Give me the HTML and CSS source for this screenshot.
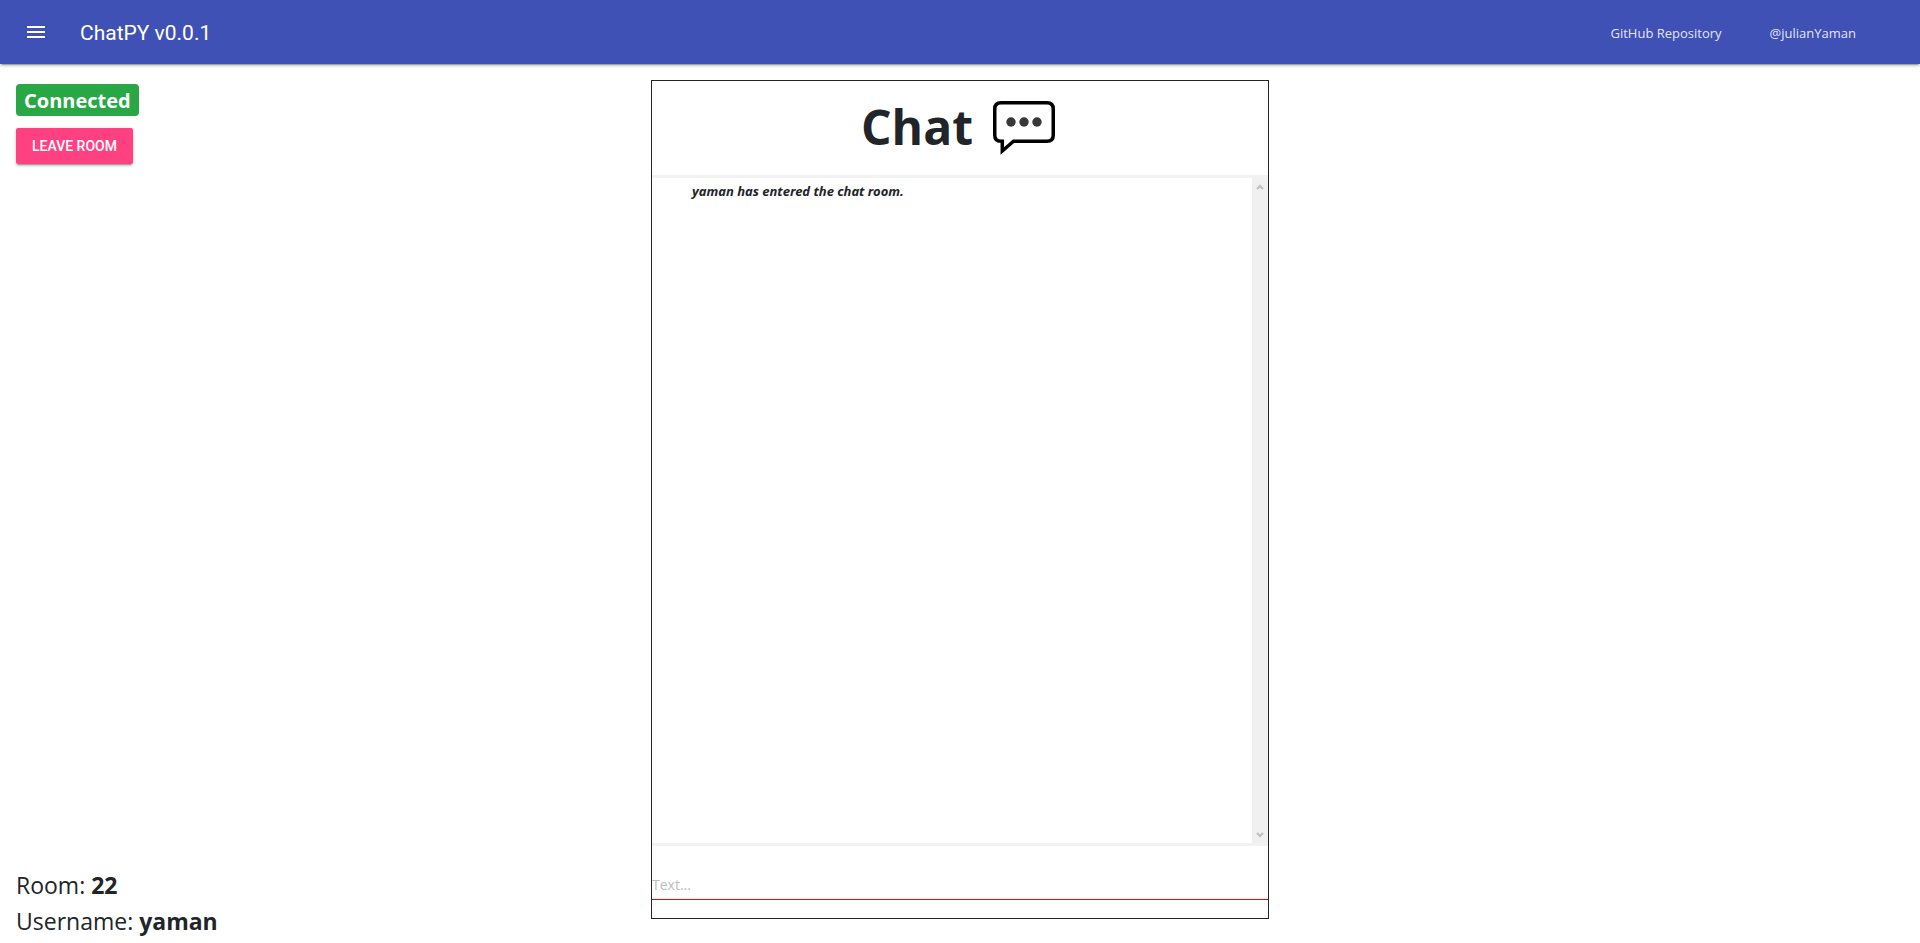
FILE: index.html
```html
<!DOCTYPE html>
<html lang="en">
<head>
<meta charset="utf-8">
<title>ChatPY</title>
<link rel="stylesheet" href="styles.css">
</head>
<body>
<header class="topbar">
  <button class="menu-button" type="button" aria-label="Open menu">
    <svg viewBox="0 0 24 24" width="24" height="24" fill="#fff"><path d="M3 18h18v-2H3v2zm0-5h18v-2H3v2zm0-7v2h18V6H3z"/></svg>
  </button>
  <span class="app-title">ChatPY v0.0.1</span>
  <nav class="links">
    <a href="#repository">GitHub Repository</a>
    <a href="#author">@julianYaman</a>
  </nav>
</header>
<main class="layout">
  <section class="side">
    <span class="status">Connected</span>
    <button class="leave" type="button">LEAVE ROOM</button>
    <div class="session">
      <div>Room: <b>22</b></div>
      <div>Username: <b>yaman</b></div>
    </div>
  </section>
  <section class="chat">
    <h1 class="chat-title">Chat
      <svg viewBox="0 0 62 54" width="62" height="54" aria-hidden="true">
        <path d="M8 1.75H54Q60.25 1.75 60.25 8V34Q60.25 40.25 54 40.25H20.500L9.300 50V40.250H8Q1.750 40.250 1.750 34V8Q1.750 1.750 8 1.750Z" fill="none" stroke="#000" stroke-width="3.500"/>
        <g fill="#383838"><circle cx="18" cy="21" r="4.700"/><circle cx="31" cy="21" r="4.700"/><circle cx="44" cy="21" r="4.700"/></g>
      </svg>
    </h1>
    <div class="log">
      <div class="messages"><p class="notice">yaman has entered the chat room.</p></div>
      <div class="scrollbar" aria-hidden="true">
        <svg viewBox="0 0 8 6" width="8" height="6"><path d="M1 5L4 2L7 5" fill="none" stroke="#bfbfbf" stroke-width="2"/></svg>
        <svg viewBox="0 0 8 6" width="8" height="6"><path d="M1 1L4 4L7 1" fill="none" stroke="#bfbfbf" stroke-width="2"/></svg>
      </div>
    </div>
    <form class="composer">
      <input class="message-input" type="text" placeholder="Text..." aria-label="Text">
    </form>
  </section>
</main>
</body>
</html>
```
FILE: styles.css
```css
* { box-sizing: border-box; }
body {
  margin: 0;
  min-height: 100vh;
  display: flex;
  flex-direction: column;
  background: #fff;
  color: #212529;
  font-family: "Open Sans", "Noto Sans", sans-serif;
}
.topbar {
  height: 64px;
  flex: none;
  display: flex;
  align-items: center;
  padding: 0 64px 0 24px;
  background: #3f51b5;
  color: #fff;
  box-shadow: 0 2px 2px rgba(0, 0, 0, .14), 0 3px 1px -2px rgba(0, 0, 0, .2), 0 1px 5px rgba(0, 0, 0, .12);
}
.menu-button {
  display: flex;
  padding: 0;
  border: 0;
  background: none;
}
.app-title {
  margin-left: 32px;
  padding-top: 2px;
  font: 21px/24px Roboto, sans-serif;
}
.links {
  margin-left: auto;
  padding-top: 2px;
  display: flex;
  gap: 48px;
  font-size: 13px;
}
.links a {
  color: rgba(255, 255, 255, .87);
  text-decoration: none;
}
.layout {
  flex: 1;
  display: grid;
  grid-template-columns: repeat(3, 1fr);
  gap: 17px;
  padding: 16px 16px 0;
}
.side {
  display: flex;
  flex-direction: column;
  align-items: flex-start;
  padding-top: 4px;
}
.status {
  padding: 1px 8px 0;
  border-radius: 4px;
  background: #28a745;
  color: #fff;
  font-size: 20px;
  font-weight: 700;
  line-height: 31px;
}
.leave {
  height: 36px;
  margin-top: 12px;
  padding: 0 16px;
  border: 0;
  border-radius: 2px;
  background: #ff4081;
  color: #fff;
  font: 500 14px/36px Roboto, sans-serif;
  box-shadow: 0 2px 2px rgba(0, 0, 0, .14), 0 3px 1px -2px rgba(0, 0, 0, .2), 0 1px 5px rgba(0, 0, 0, .12);
}
.session {
  margin-top: auto;
  padding-bottom: 4px;
  font-size: 23px;
  line-height: 36px;
}
.chat {
  display: flex;
  flex-direction: column;
  margin-bottom: 24px;
  border: 1px solid #212529;
}
.chat-title {
  display: flex;
  justify-content: center;
  align-items: center;
  gap: 20px;
  height: 94px;
  margin: 0;
  padding: 0 4px 2px 0;
  font-size: 48px;
  line-height: 64px;
}
.chat-title svg { margin-top: 2px; }
.log {
  flex: 1;
  display: flex;
  border: solid #f2f2f2;
  border-width: 3px 0;
}
.messages {
  flex: 1;
  padding: 1px 40px;
}
.notice {
  margin: 0;
  font-family: "Noto Sans", "Open Sans", sans-serif;
  font-size: 13px;
  font-style: italic;
  font-weight: 700;
  line-height: 24px;
}
.scrollbar {
  width: 16px;
  display: flex;
  flex-direction: column;
  justify-content: space-between;
  align-items: center;
  padding: 6px 0 5px;
  background: #f0f0f0;
}
.composer {
  padding: 20px 0 18px;
}
.message-input {
  display: block;
  width: 100%;
  height: 34px;
  padding: 6px 0 3px;
  border: 0;
  border-bottom: 1px solid #f00;
  outline: 0;
  background: none;
  color: #212529;
  font: 14px/24px "Open Sans", "Noto Sans", sans-serif;
}
.message-input::placeholder { color: #bdbdbd; opacity: 1; }
```
